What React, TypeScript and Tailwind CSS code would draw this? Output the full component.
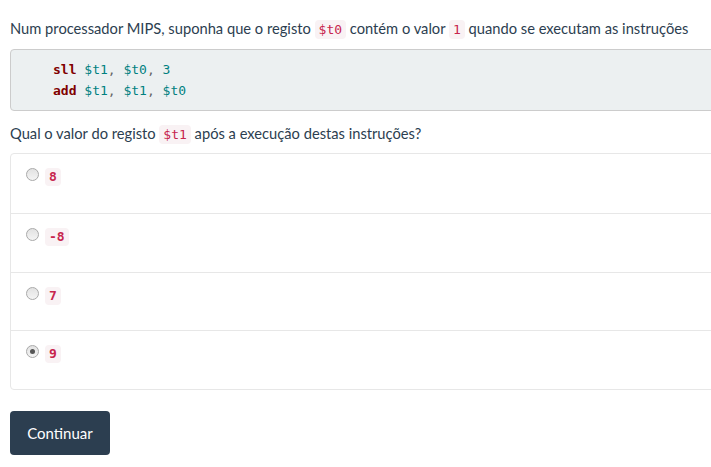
const OPTIONS = [
  { value: "8", checked: false },
  { value: "-8", checked: false },
  { value: "7", checked: false },
  { value: "9", checked: true },
];

function Code({ children }: { children: React.ReactNode }) {
  return (
    <code className="rounded bg-[#f9f2f4] px-[4px] py-[2px] font-['DejaVu_Sans_Mono',monospace] text-[13px] text-[#c7254e]">
      {children}
    </code>
  );
}

function Radio({ checked }: { checked: boolean }) {
  return (
    <span className="mt-[4px] grid size-[13px] shrink-0 place-items-center rounded-full border border-[#a9a9a9] bg-gradient-to-b from-[#e2e2e2] to-[#f4f4f4]">
      {checked && <span className="size-[5px] rounded-full bg-[#555]" />}
    </span>
  );
}

export default function App() {
  return (
    <div className="h-[467px] w-[711px] overflow-hidden bg-white">
      <div className="w-[780px] pl-[10px] pt-[18px] font-['Lato','Open_Sans',sans-serif] text-[14.7px] leading-[21px] text-[#2c3e50]">
        <p>
          Num processador MIPS, suponha que o registo <Code>$t0</Code> contém o valor <Code>1</Code> quando se executam as
          instruções
        </p>

        <pre className="mt-[9px] rounded border border-[#cccccc] bg-[#ecf0f1] py-[9px] pl-[42px] font-['DejaVu_Sans_Mono',monospace] text-[13px] leading-[21px] text-[#333]">
          <div>
            <span className="font-bold text-[#800000]">sll</span> <span className="text-[#008080]">$t1</span>
            <span className="text-[#666]">, </span>
            <span className="text-[#008080]">$t0</span>
            <span className="text-[#666]">, </span>
            <span className="text-[#008080]">3</span>
          </div>
          <div>
            <span className="font-bold text-[#800000]">add</span> <span className="text-[#008080]">$t1</span>
            <span className="text-[#666]">, </span>
            <span className="text-[#008080]">$t1</span>
            <span className="text-[#666]">, </span>
            <span className="text-[#008080]">$t0</span>
          </div>
        </pre>

        <p className="mt-[12px]">
          Qual o valor do registo <Code>$t1</Code> após a execução destas instruções?
        </p>

        <div className="mt-[8px] rounded border border-[#e7e7e7]">
          {OPTIONS.map((o, i) => (
            <div
              key={o.value}
              className={`flex h-[58.75px] items-start gap-[6px] pl-[15px] pt-[10px] ${i > 0 ? "border-t border-[#e7e7e7]" : ""}`}
            >
              <Radio checked={o.checked} />
              <span className="mt-[4px] rounded bg-[#f9f2f4] px-[4px] font-['DejaVu_Sans_Mono',monospace] text-[13px] font-bold leading-[18px] text-[#c7254e]">
                {o.value}
              </span>
            </div>
          ))}
        </div>

        <button className="mt-[21px] h-[44px] w-[100px] rounded bg-[#2c3e50] text-[15px] text-white">Continuar</button>
      </div>
    </div>
  );
}
